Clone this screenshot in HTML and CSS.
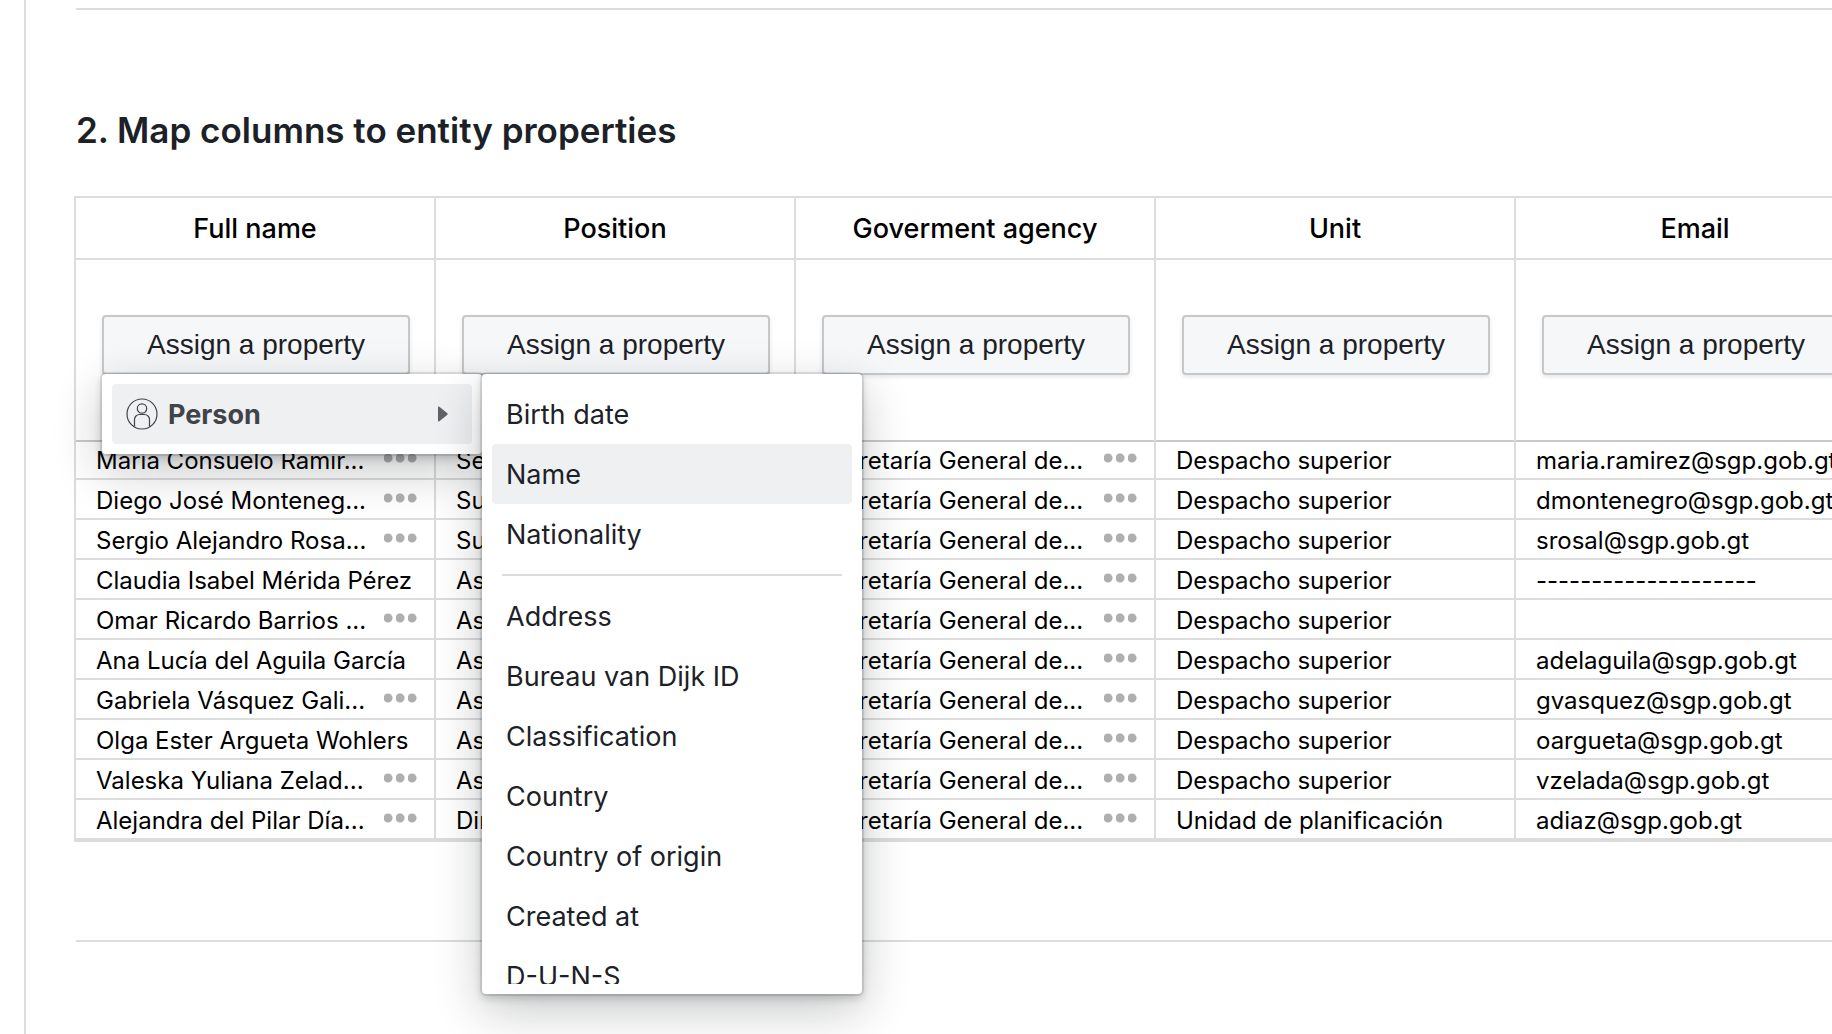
FILE: index.html
```
<!DOCTYPE html>
<html lang="en">
<head>
<meta charset="utf-8">
<title>Map columns to entity properties</title>
<link rel="stylesheet" href="styles.css">
</head>
<body>
<main class="content">
  <section class="section">
    <h2 class="section-title">2. Map columns to entity properties</h2>
    <table class="mapping">
      <thead>
        <tr class="names">
          <th scope="col">Full name</th>
          <th scope="col">Position</th>
          <th scope="col">Goverment agency</th>
          <th scope="col">Unit</th>
          <th scope="col">Email</th>
        </tr>
        <tr class="assign">
          <td>
            <div class="select">
              <button class="button" type="button">Assign a property</button>
              <div class="popover">
                <button class="item item-active item-group" type="button">
                  <svg class="person" viewBox="0 0 32 32" aria-hidden="true">
                    <circle cx="16" cy="16" r="15"/>
                    <circle cx="16" cy="10.500" r="4.700"/>
                    <path d="M8.500 28.500V21.500a5 5 0 0 1 5-5h5a5 5 0 0 1 5 5v7"/>
                  </svg>
                  <span class="group-name">Person</span>
                  <svg class="caret" viewBox="0 0 10 16" aria-hidden="true"><path d="M0 1.200Q0 0 1 .6L9.400 7.200Q10 8 9.400 8.800L1 15.400Q0 16 0 14.800z"/></svg>
                </button>
                <div class="popover submenu">
                  <div class="scroll">
                    <button class="item" type="button">Birth date</button>
                    <button class="item item-active" type="button">Name</button>
                    <button class="item" type="button">Nationality</button>
                    <hr class="divider">
                    <button class="item" type="button">Address</button>
                    <button class="item" type="button">Bureau van Dijk ID</button>
                    <button class="item" type="button">Classification</button>
                    <button class="item" type="button">Country</button>
                    <button class="item" type="button">Country of origin</button>
                    <button class="item" type="button">Created at</button>
                    <button class="item" type="button">D-U-N-S</button>
                  </div>
                </div>
              </div>
            </div>
          </td>
          <td><button class="button" type="button">Assign a property</button></td>
          <td><button class="button" type="button">Assign a property</button></td>
          <td><button class="button" type="button">Assign a property</button></td>
          <td><button class="button" type="button">Assign a property</button></td>
        </tr>
      </thead>
      <tbody>
        <tr>
          <td><div class="cell">María Consuelo Ramír...<i class="more"></i></div></td>
          <td><div class="cell">Secretaria</div></td>
          <td><div class="cell">Secretaría General de...<i class="more"></i></div></td>
          <td><div class="cell">Despacho superior</div></td>
          <td><div class="cell">maria.ramirez@sgp.gob.gt</div></td>
        </tr>
        <tr>
          <td><div class="cell">Diego José Monteneg...<i class="more"></i></div></td>
          <td><div class="cell">Subsecretario</div></td>
          <td><div class="cell">Secretaría General de...<i class="more"></i></div></td>
          <td><div class="cell">Despacho superior</div></td>
          <td><div class="cell">dmontenegro@sgp.gob.gt</div></td>
        </tr>
        <tr>
          <td><div class="cell">Sergio Alejandro Rosa...<i class="more"></i></div></td>
          <td><div class="cell">Subsecretario</div></td>
          <td><div class="cell">Secretaría General de...<i class="more"></i></div></td>
          <td><div class="cell">Despacho superior</div></td>
          <td><div class="cell">srosal@sgp.gob.gt</div></td>
        </tr>
        <tr>
          <td><div class="cell">Claudia Isabel Mérida Pérez</div></td>
          <td><div class="cell">Asesora</div></td>
          <td><div class="cell">Secretaría General de...<i class="more"></i></div></td>
          <td><div class="cell">Despacho superior</div></td>
          <td><div class="cell">--------------------</div></td>
        </tr>
        <tr>
          <td><div class="cell">Omar Ricardo Barrios ...<i class="more"></i></div></td>
          <td><div class="cell">Asesor</div></td>
          <td><div class="cell">Secretaría General de...<i class="more"></i></div></td>
          <td><div class="cell">Despacho superior</div></td>
          <td></td>
        </tr>
        <tr>
          <td><div class="cell">Ana Lucía del Aguila García</div></td>
          <td><div class="cell">Asistente</div></td>
          <td><div class="cell">Secretaría General de...<i class="more"></i></div></td>
          <td><div class="cell">Despacho superior</div></td>
          <td><div class="cell">adelaguila@sgp.gob.gt</div></td>
        </tr>
        <tr>
          <td><div class="cell">Gabriela Vásquez Gali...<i class="more"></i></div></td>
          <td><div class="cell">Asistente</div></td>
          <td><div class="cell">Secretaría General de...<i class="more"></i></div></td>
          <td><div class="cell">Despacho superior</div></td>
          <td><div class="cell">gvasquez@sgp.gob.gt</div></td>
        </tr>
        <tr>
          <td><div class="cell">Olga Ester Argueta Wohlers</div></td>
          <td><div class="cell">Asistente</div></td>
          <td><div class="cell">Secretaría General de...<i class="more"></i></div></td>
          <td><div class="cell">Despacho superior</div></td>
          <td><div class="cell">oargueta@sgp.gob.gt</div></td>
        </tr>
        <tr>
          <td><div class="cell">Valeska Yuliana Zelad...<i class="more"></i></div></td>
          <td><div class="cell">Asistente</div></td>
          <td><div class="cell">Secretaría General de...<i class="more"></i></div></td>
          <td><div class="cell">Despacho superior</div></td>
          <td><div class="cell">vzelada@sgp.gob.gt</div></td>
        </tr>
        <tr>
          <td><div class="cell">Alejandra del Pilar Día...<i class="more"></i></div></td>
          <td><div class="cell">Directora</div></td>
          <td><div class="cell">Secretaría General de...<i class="more"></i></div></td>
          <td><div class="cell">Unidad de planificación</div></td>
          <td><div class="cell">adiaz@sgp.gob.gt</div></td>
        </tr>
      </tbody>
    </table>
  </section>
</main>
</body>
</html>
```
FILE: styles.css
```
* { box-sizing: border-box; }

body {
  margin: 0;
  background: #fff;
  color: #1c2127;
  font-family: Inter, "Liberation Sans", sans-serif;
}

.content {
  min-height: 100vh;
  margin-left: 24px;
  padding: 8px 0 0 50px;
  border-left: 2px solid #dcdcdd;
  overflow: clip;
}

/* A section is ruled off from its neighbours above and below. */
.section {
  padding: 100px 0 98px;
  border-top: 2px solid #dcdcdd;
  border-bottom: 2px solid #dcdcdd;
}

.section-title {
  margin: 0 0 46px;
  font-size: 35px;
  font-weight: 600;
  line-height: 40px;
}

.mapping {
  width: 1802px;
  margin-left: -2px;
  table-layout: fixed;
  border-collapse: separate;
  border-spacing: 0;
  border: solid #dcdcdd;
  border-width: 2px 0 2px 2px;
  color: #000;
}

.mapping th,
.mapping td {
  padding: 0;
  border-right: 2px solid #dcdcdd;
}

.names th {
  height: 62px;
  border-bottom: 2px solid #dcdcdd;
  font-size: 27px;
  font-weight: 500;
}

.mapping .assign td {
  height: 180px;
  padding: 55px 24px 0 26px;
  vertical-align: top;
  box-shadow: 0 2px 0 #c9c9ca;
}

.mapping tbody td {
  height: 40px;
  border-bottom: 2px solid #dcdcdd;
}

.cell {
  display: flex;
  align-items: center;
  justify-content: space-between;
  padding: 4px 16px 0 20px;
  font-size: 24px;
  line-height: 34px;
  white-space: nowrap;
}

/* Three dots that mark a value cut short. */
.more {
  width: 34px;
  height: 12px;
  margin-bottom: 6px;
  background: radial-gradient(circle at 4px 6px, #afafb0 4px, transparent 5px) 0 0 / 12px 12px repeat-x;
}

.select { position: relative; }

.button {
  display: block;
  width: 100%;
  height: 60px;
  padding: 0;
  border: 2px solid #c5c7c9;
  border-radius: 4px;
  background: #f6f7f9;
  box-shadow: 0 2px 4px rgba(17, 20, 24, 0.1);
  color: #1c2127;
  font: 28px "Liberation Sans", Arial, sans-serif;
}

.popover {
  position: absolute;
  z-index: 1;
  top: 59px;
  left: 0;
  width: 380px;
  padding: 10px;
  border-radius: 4px;
  background: #fff;
  box-shadow:
    0 0 0 2px rgba(17, 20, 24, 0.1),
    0 4px 8px rgba(17, 20, 24, 0.2),
    0 16px 48px rgba(17, 20, 24, 0.24);
}

.submenu {
  top: 0;
  left: 100%;
}

.scroll {
  max-height: 600px;
  overflow-y: auto;
  scrollbar-width: none;
}

.item {
  display: flex;
  align-items: center;
  width: 100%;
  height: 60px;
  padding: 0 14px;
  border: 0;
  border-radius: 4px;
  background: none;
  color: #1c2127;
  font: 27px Inter, "Liberation Sans", sans-serif;
  text-align: left;
}

.item-active { background: #eff0f2; }

.item-group {
  gap: 10px;
  padding-right: 24px;
  color: #404448;
  font-weight: 700;
}

.group-name { flex: 1; }

.person {
  width: 32px;
  height: 32px;
  fill: none;
  stroke: #404448;
  stroke-width: 1.200;
}

.caret {
  width: 10px;
  height: 16px;
  fill: #5f6268;
}

.divider {
  height: 2px;
  margin: 10px;
  border: 0;
  background: #dcdcdd;
}
```
